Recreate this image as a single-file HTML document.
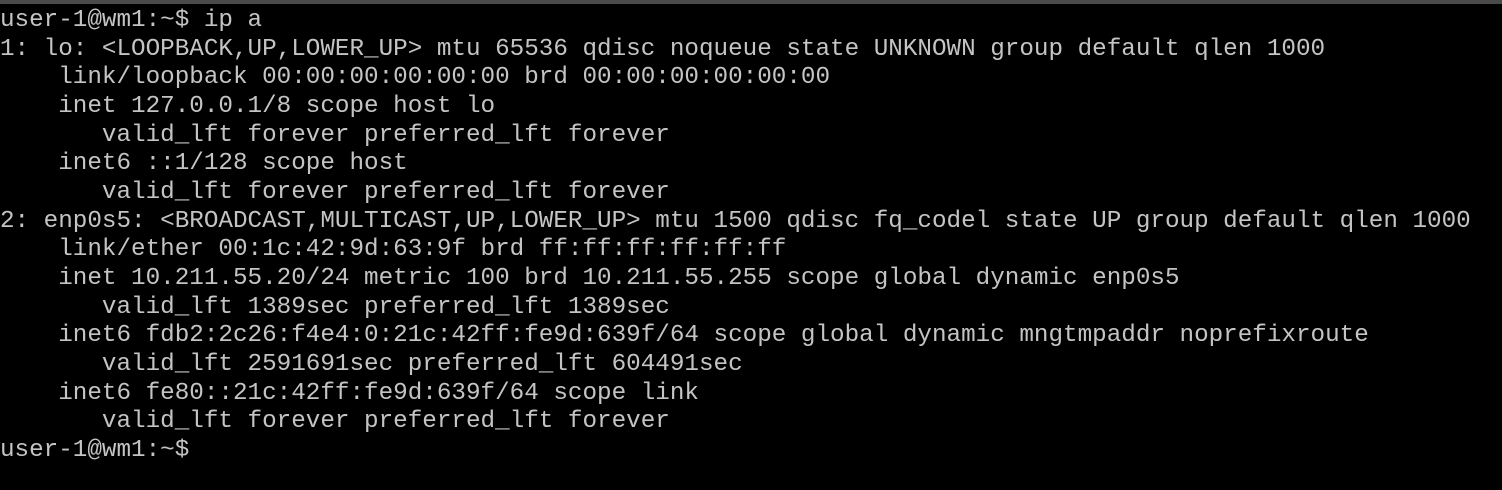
<!DOCTYPE html>
<html><head><style>
html,body{margin:0;padding:0;background:#000;width:1502px;height:490px;overflow:hidden}
.bar{position:absolute;left:0;top:0;width:1502px;height:4px;background:#4a4a4a}
pre{position:absolute;left:0;top:7px;margin:0;font-family:"Liberation Mono","DejaVu Sans Mono",monospace;font-size:24.27px;line-height:28.65px;color:#c4c4c4;letter-spacing:0}
</style></head><body>
<div class="bar"></div>
<pre>user-1@wm1:~$ ip a
1: lo: &lt;LOOPBACK,UP,LOWER_UP&gt; mtu 65536 qdisc noqueue state UNKNOWN group default qlen 1000
    link/loopback 00:00:00:00:00:00 brd 00:00:00:00:00:00
    inet 127.0.0.1/8 scope host lo
       valid_lft forever preferred_lft forever
    inet6 ::1/128 scope host
       valid_lft forever preferred_lft forever
2: enp0s5: &lt;BROADCAST,MULTICAST,UP,LOWER_UP&gt; mtu 1500 qdisc fq_codel state UP group default qlen 1000
    link/ether 00:1c:42:9d:63:9f brd ff:ff:ff:ff:ff:ff
    inet 10.211.55.20/24 metric 100 brd 10.211.55.255 scope global dynamic enp0s5
       valid_lft 1389sec preferred_lft 1389sec
    inet6 fdb2:2c26:f4e4:0:21c:42ff:fe9d:639f/64 scope global dynamic mngtmpaddr noprefixroute
       valid_lft 2591691sec preferred_lft 604491sec
    inet6 fe80::21c:42ff:fe9d:639f/64 scope link
       valid_lft forever preferred_lft forever
user-1@wm1:~$</pre>
</body></html>
